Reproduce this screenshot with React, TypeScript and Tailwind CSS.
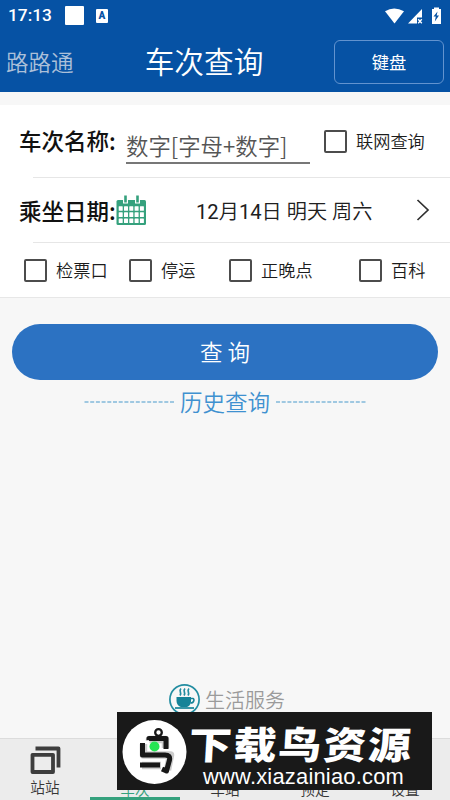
import React from 'react';

function Check({ label, className = '' }: { label: string; className?: string }) {
  return (
    <label className={`flex items-center whitespace-nowrap text-[17.2px] font-[350] leading-[24px] text-[#1c1c1c] ${className}`}>
      <span className="mr-[9px] h-[23px] w-[23px] shrink-0 rounded-[2px] border-[2.5px] border-[#4c4c4c] bg-white" />
      <span>{label}</span>
    </label>
  );
}

function StatusBar() {
  return (
    <div className="flex h-[31px] items-center pl-[8px] pr-[8px] text-white">
      <span className="w-[57px] font-[Roboto] text-[17.3px] font-medium">17:13</span>
      <span className="h-[19px] w-[19px] rounded-[1px] bg-white" />
      <span className="ml-[12px] flex h-[14px] w-[12px] items-center justify-center rounded-[1px] bg-white font-[Roboto] text-[10px] font-black leading-none text-[#0652a4]">A</span>
      <svg className="ml-auto" width="58" height="20" viewBox="0 0 58 20" fill="#fff">
        <path d="M1 5.2Q10 0 20 5.2L10.5 17.500Z" />
        <path d="M38 3V11.500H33V17.500H24Z" />
        <path d="m34.200 13.300 3.600 4m0-4-3.600 4" stroke="#fff" strokeWidth="1.300" />
        <path d="M48 3h2V1.500h5v1.500h2v15h-9Z" />
        <path d="m53.500 5.500-4 5h2.300l-1 5 4.200-6h-2.300Z" fill="#0652a4" />
      </svg>
    </div>
  );
}

function CalendarIcon() {
  return (
    <svg width="31" height="31" viewBox="0 0 31 31" className="shrink-0">
      <rect x="0.500" y="5" width="29.500" height="25" rx="1.500" fill="#35a17d" />
      <path d="M7 0.500h5v8H7ZM19 0.500h5v8h-5Z" fill="#fff" />
      <path d="M8.200 0.500h2.600v7H8.200ZM20.200 0.500h2.600v7h-2.600Z" fill="#35a17d" />
      <g fill="#fff">
        {[11.2, 17.3, 23.4].map((y) =>
          [2.7, 8, 13.3, 18.6, 23.9].map((x) => <rect key={`${x}-${y}`} x={x} y={y} width="4" height="4.6" rx="0.5" />),
        )}
      </g>
    </svg>
  );
}

function CupIcon() {
  return (
    <svg width="32" height="32" viewBox="0 0 32 32" fill="none" className="shrink-0">
      <circle cx="15.500" cy="15.500" r="14.600" stroke="#238da1" strokeWidth="1.700" />
      <path d="M7.500 13h14.500v3.500c0 4-2 6.500-5 6.500h-4c-3 0-5.500-2.500-5.500-6.500Z" fill="#168398" />
      <path d="M22 14.500h2c1.500 0 1.500 4.500-2.500 4.500" stroke="#168398" strokeWidth="1.600" />
      <path d="M6 24h19" stroke="#168398" strokeWidth="1.700" />
      <path d="M12 4.500c-3 3 1.500 3.500-1 7M16 4.500c-3 3 1.500 3.500-1 7M20 4.500c-3 3 1.500 3.500-1 7" stroke="#238da1" strokeWidth="1.700" />
    </svg>
  );
}

function Watermark() {
  return (
    <div className="absolute left-[117px] top-[712px] flex h-[78px] w-[315px] bg-[#191919] text-white">
      <svg className="ml-[5px] mt-[7px] shrink-0" width="66" height="66" viewBox="0 0 66 66" fill="none">
        <circle cx="32.500" cy="33" r="32" fill="#fff" />
        <g strokeLinejoin="round">
          <path d="M27.500 22V20.500H43.500V29M21.500 25V36H48.500L45.500 51M20 46.500H39" stroke="#ccc" strokeWidth="7.500" />
          <circle cx="36.500" cy="13.500" r="3.300" stroke="#171717" strokeWidth="2.300" />
          <path d="M27 21V19.500H44V30M20.500 24V36H43Q48.500 36 47.500 41L44.500 52L40 50M18 46H38" stroke="#171717" strokeWidth="5" />
        </g>
        <circle cx="32.500" cy="27.500" r="5" fill="#25e453" />
      </svg>
      <div className="flex-1">
        <div className="mt-[7px] h-[46px] whitespace-nowrap pl-[1px] text-[43px] font-black leading-[46px] tracking-[1.800px]">
          <span className="inline-block origin-left scale-y-[.88] -skew-x-3">下载鸟资源</span>
        </div>
        <div className="whitespace-nowrap pl-[15px] pt-px font-['Liberation_Sans',sans-serif] text-[21.900px] leading-[22px] tracking-[0.220px]">www.xiazainiao.com</div>
      </div>
    </div>
  );
}

export default function App() {
  return (
    <main className="relative flex h-[800px] w-[450px] flex-col overflow-hidden bg-[#f7f7f7] font-['Noto_Sans_CJK_SC',sans-serif]">
      <header className="h-[92px] shrink-0 bg-[#0652a4] text-white">
        <StatusBar />
        <div className="grid h-[61px] grid-cols-[110px_1fr_110px] items-center pl-[7px] pr-[7px]">
          <span className="-ml-px text-[22.500px] font-[350] text-[#acc0d9]">路路通</span>
          <h1 className="-ml-[42px] text-center text-[29.700px] font-[350]">车次查询</h1>
          <button className="ml-px h-[44px] w-[110px] rounded-[6px] border border-[#6293cf] text-[17.300px]">键盘</button>
        </div>
      </header>

      <section className="mt-[13px] h-[193px] shrink-0 border-b border-[#e7e7e7] bg-white">
        <div className="flex h-[72px] items-center pl-[19px]">
          <span className="w-[107px] whitespace-nowrap text-[22.500px] font-medium text-[#111]">车次名称:</span>
          <div className="mt-[9px] h-[37px] w-[184px] whitespace-nowrap border-b-2 border-[#777] text-[22.400px] font-[350] leading-[36px] text-[#555]">数字[字母+数字]</div>
          <Check label="联网查询" className="ml-[14px]" />
        </div>
        <div className="ml-[33px] h-px bg-[#e6e6e6]" />
        <div className="flex h-[64px] items-center pl-[19px]">
          <span className="w-[97px] whitespace-nowrap pt-px text-[22.500px] font-medium text-[#111]">乘坐日期:</span>
          <CalendarIcon />
          <span className="ml-[49px] w-[220px] whitespace-nowrap pt-[4px] font-['Roboto','Noto_Sans_CJK_SC',sans-serif] text-[20.200px] font-normal text-[#202020]">
            12<span className="font-[350]">月</span>14<span className="font-[350]">日 明天 周六</span>
          </span>
          <svg width="14" height="24" viewBox="0 0 14 24" fill="none">
            <path d="m1.500 2 10.500 10-10.500 10" stroke="#303030" strokeWidth="1.700" />
          </svg>
        </div>
        <div className="ml-[33px] h-px bg-[#e6e6e6]" />
        <div className="flex h-[54px] items-center pl-[24px]">
          <Check label="检票口" className="w-[105px]" />
          <Check label="停运" className="w-[100px]" />
          <Check label="正晚点" className="w-[130px]" />
          <Check label="百科" />
        </div>
      </section>

      <button className="mx-[12px] mt-[26px] h-[56px] shrink-0 rounded-full bg-[#2c72c2] text-[22.500px] font-[350] text-white">查 询</button>
      <div className="flex h-[44px] items-center justify-center gap-[6px] text-[22.500px] font-[350] text-[#3f91d0]">
        <svg width="90" height="2"><path d="M0.500 1h90" stroke="#83b9da" strokeWidth="1.300" strokeDasharray="4 1.700" /></svg>
        <span>历史查询</span>
        <svg width="90" height="2"><path d="M0 1h90" stroke="#83b9da" strokeWidth="1.300" strokeDasharray="4 1.700" /></svg>
      </div>

      <div className="mt-auto flex h-[54px] items-start gap-[4px] pl-[169px] text-[20px] font-[350] leading-[32px] text-[#9b9b9b]">
        <CupIcon />
        <span>生活服务</span>
      </div>
      <nav className="grid h-[62px] shrink-0 grid-cols-5 border-t border-[#dcdcdc] bg-[#ececec] text-[14.700px] font-[350] text-[#363636]">
        <div className="flex flex-col items-center">
          <svg className="mt-[7px]" width="31" height="29" viewBox="0 0 31 29" fill="none" stroke="#3d3d3d" strokeWidth="3.800" strokeLinejoin="round">
            <path d="M5.500 2.500H28.500V21.500M2.500 8.800H23V26H2.500Z" />
          </svg>
          <span className="leading-[24px]">站站</span>
        </div>
        {['车次', '车站', '预定', '设置'].map((name, index) => (
          <div key={name} className={`flex items-end justify-center leading-[24px] ${index === 0 ? 'border-b-3 border-[#35a17d] text-[#35a17d]' : ''}`}>
            <span className={index === 0 ? '-mb-[4px]' : '-mb-[1px]'}>{name}</span>
          </div>
        ))}
      </nav>
      <Watermark />
    </main>
  );
}
